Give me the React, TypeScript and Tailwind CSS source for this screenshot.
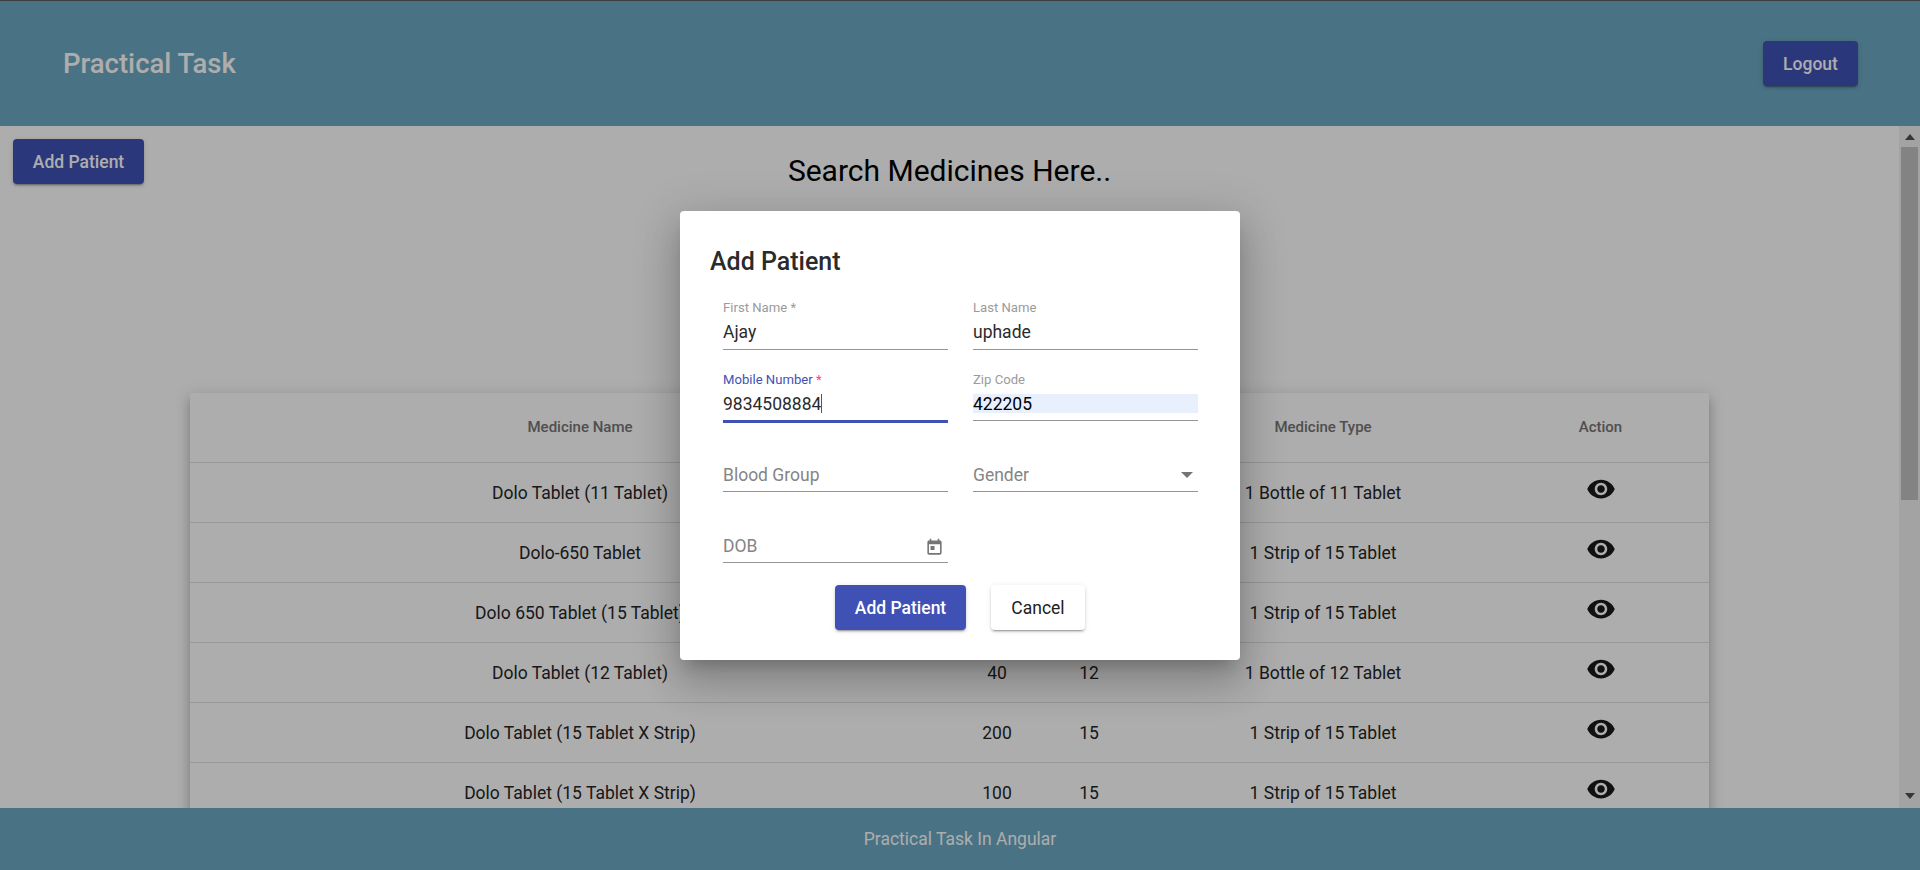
import React from 'react';

const font = { fontFamily: 'Roboto, "Noto Sans", sans-serif' };

const medicines = [
    { name: 'Dolo Tablet (11 Tablet)', price: '35', pack: '11', type: '1 Bottle of 11 Tablet' },
    { name: 'Dolo-650 Tablet', price: '30', pack: '15', type: '1 Strip of 15 Tablet' },
    { name: 'Dolo 650 Tablet (15 Tablet)', price: '30', pack: '15', type: '1 Strip of 15 Tablet' },
    { name: 'Dolo Tablet (12 Tablet)', price: '40', pack: '12', type: '1 Bottle of 12 Tablet' },
    { name: 'Dolo Tablet (15 Tablet X Strip)', price: '200', pack: '15', type: '1 Strip of 15 Tablet' },
    { name: 'Dolo Tablet (15 Tablet X Strip)', price: '100', pack: '15', type: '1 Strip of 15 Tablet' },
];

const raised = 'shadow-[0_3px_1px_-2px_rgba(0,0,0,0.2),0_2px_2px_0_rgba(0,0,0,0.14),0_1px_5px_0_rgba(0,0,0,0.12)]';

function EyeIcon() {
    return (
        <svg viewBox="0 0 24 24" className="w-[30px] h-[30px] mx-auto -mt-[6px] fill-[#1a1a1a] block">
            <path d="M12 4.5C7 4.5 2.73 7.61 1 12c1.73 4.39 6 7.5 11 7.5s9.27-3.11 11-7.5c-1.73-4.39-6-7.5-11-7.5zM12 17c-2.76 0-5-2.24-5-5s2.24-5 5-5 5 2.24 5 5-2.24 5-5 5zm0-8c-1.66 0-3 1.34-3 3s1.34 3 3 3 3-1.34 3-3-1.34-3-3-3z" />
        </svg>
    );
}

function Field({ label, value, required, focused, autofilled }: { label: string; value: string; required?: boolean; focused?: boolean; autofilled?: boolean }) {
    const lower = focused || autofilled;
    return (
        <div className="h-[60px] flex flex-col justify-end">
            <div className={`text-[13.125px] leading-[16px] ${focused ? 'text-[#3f51b5]' : 'text-[#9a9a9a]'}`}>
                {label}
                {required && <span className={focused ? 'text-[#ff4081]' : ''}> *</span>}
            </div>
            <div className={`${lower ? 'mt-[6px] pt-[2px]' : 'mt-[7px]'} text-[17.5px] leading-[19px] h-[19px] flex items-center ${autofilled ? 'bg-[#e8f0fe] text-black' : 'text-[#2b2b2b]'}`}>
                {value}
                {focused && <span className="w-px h-[19px] -mt-[2px] bg-[#3f51b5]" />}
            </div>
            <div className={focused ? 'mt-[7px] h-[3px] -mb-[2px] bg-[#3f51b5]' : 'mt-[7px] h-px bg-[#949494]'} />
        </div>
    );
}

function EmptyField({ label, children }: { label: string; children?: React.ReactNode }) {
    return (
        <div className="h-[60px] flex flex-col justify-end">
            <div className="h-[24px] flex items-center justify-between text-[17.5px] text-[#858585]">
                <span className="mt-[2px]">{label}</span>
                {children}
            </div>
            <div className="mt-[4px] h-px bg-[#949494]" />
        </div>
    );
}

export default function App() {
    return (
        <div className="relative h-screen flex flex-col overflow-hidden bg-white" style={font}>
            <header className="h-[126px] shrink-0 flex items-center justify-between pl-[63px] pr-[62px] bg-[#6ca8c4] border-t border-t-[#5a5a5a] text-white">
                <h1 className="text-[27.5px] font-medium">Practical Task</h1>
                <button className={`w-[95px] h-[45px] pt-[2px] rounded bg-[#3f51b5] text-[17.5px] font-medium text-white ${raised}`}>Logout</button>
            </header>

            <div className="flex-1 min-h-0 flex">
                <main className="flex-1 min-w-0 overflow-hidden relative">
                    <button className={`absolute left-[13px] top-[13px] w-[131px] h-[45px] pt-[2px] rounded bg-[#3f51b5] text-[17.5px] font-medium text-white ${raised}`}>Add Patient</button>
                    <h2 className="pt-[26px] text-center text-[30px] leading-[38px] text-black">Search Medicines Here..</h2>

                    <div className="mt-[203px] ml-[190px] w-[1519px] bg-white shadow-[0_5px_5px_-3px_rgba(0,0,0,0.2),0_8px_10px_1px_rgba(0,0,0,0.14),0_3px_14px_2px_rgba(0,0,0,0.12)]">
                        <table className="w-full table-fixed text-center">
                            <colgroup>
                                <col className="w-[780px]" />
                                <col className="w-[54px]" />
                                <col className="w-[130px]" />
                                <col className="w-[338px]" />
                                <col className="w-[217px]" />
                            </colgroup>
                            <thead>
                                <tr className="h-[69px] text-[15px] text-[#757575] border-b border-[#e0e0e0]">
                                    <th className="font-medium">Medicine Name</th>
                                    <th className="font-medium">Price</th>
                                    <th className="font-medium">Pack</th>
                                    <th className="font-medium">Medicine Type</th>
                                    <th className="font-medium">Action</th>
                                </tr>
                            </thead>
                            <tbody className="text-[17.5px] text-[#262626]">
                                {medicines.map((med, index) => (
                                    <tr key={index} className="h-[60px] border-b border-[#e0e0e0]">
                                        <td className="pt-[2px]">{med.name}</td>
                                        <td className="pt-[2px]">{med.price}</td>
                                        <td className="pt-[2px]">{med.pack}</td>
                                        <td className="pt-[2px]">{med.type}</td>
                                        <td><EyeIcon /></td>
                                    </tr>
                                ))}
                            </tbody>
                        </table>
                    </div>
                </main>

                <div className="w-[21px] shrink-0 bg-[#f1f1f1] flex flex-col items-center">
                    <svg viewBox="0 0 10 6" className="w-[10px] h-[6px] mt-[8px] fill-[#505050]"><path d="M5 0l5 6H0z" /></svg>
                    <div className="mt-[7px] w-[17px] h-[353px] bg-[#c1c1c1]" />
                    <div className="flex-1" />
                    <svg viewBox="0 0 10 6" className="w-[10px] h-[6px] mb-[9px] fill-[#505050]"><path d="M5 6l5-6H0z" /></svg>
                </div>
            </div>

            <footer className="h-[62px] shrink-0 flex items-center justify-center bg-[#6ca8c4] text-white text-[17.5px] z-10">Practical Task In Angular</footer>

            <div className="absolute inset-0 z-20 bg-black/32 flex items-center justify-center">
                <div className="w-[560px] h-[449px] rounded bg-white px-[30px] pt-[33px] shadow-[0_11px_15px_-7px_rgba(0,0,0,0.2),0_24px_38px_3px_rgba(0,0,0,0.14),0_9px_46px_8px_rgba(0,0,0,0.12)]">
                    <h2 className="text-[25px] leading-[36px] font-medium text-[#2b2b2b]">Add Patient</h2>
                    <div className="mt-[10px] pl-[13px] grid grid-cols-[225px_225px] gap-x-[25px] gap-y-[11px]">
                        <Field label="First Name" value="Ajay" required />
                        <Field label="Last Name" value="uphade" />
                        <Field label="Mobile Number" value="9834508884" required focused />
                        <Field label="Zip Code" value="422205" autofilled />
                        <EmptyField label="Blood Group" />
                        <EmptyField label="Gender">
                            <svg viewBox="0 0 10 5" className="w-[12px] h-[6px] mr-[5px] fill-[#757575]"><path d="M0 0l5 5 5-5z" /></svg>
                        </EmptyField>
                        <EmptyField label="DOB">
                            <svg viewBox="0 0 24 24" className="w-[19px] h-[19px] mr-[4px] mt-[3px] fill-[#757575]">
                                <path d="M19 3h-1V1h-2v2H8V1H6v2H5c-1.11 0-2 .9-2 2v14a2 2 0 0 0 2 2h14c1.1 0 2-.9 2-2V5c0-1.1-.9-2-2-2zm0 16H5V8h14v11zM7 10h5v5H7z" />
                            </svg>
                        </EmptyField>
                    </div>
                    <div className="mt-[22px] flex justify-center gap-[25px]">
                        <button className={`w-[131px] h-[45px] pt-[2px] rounded bg-[#3f51b5] text-[17.5px] font-medium text-white ${raised}`}>Add Patient</button>
                        <button className={`w-[94px] h-[45px] pt-[2px] rounded bg-white text-[17.5px] text-[#212121] ${raised}`}>Cancel</button>
                    </div>
                </div>
            </div>
        </div>
    );
}
